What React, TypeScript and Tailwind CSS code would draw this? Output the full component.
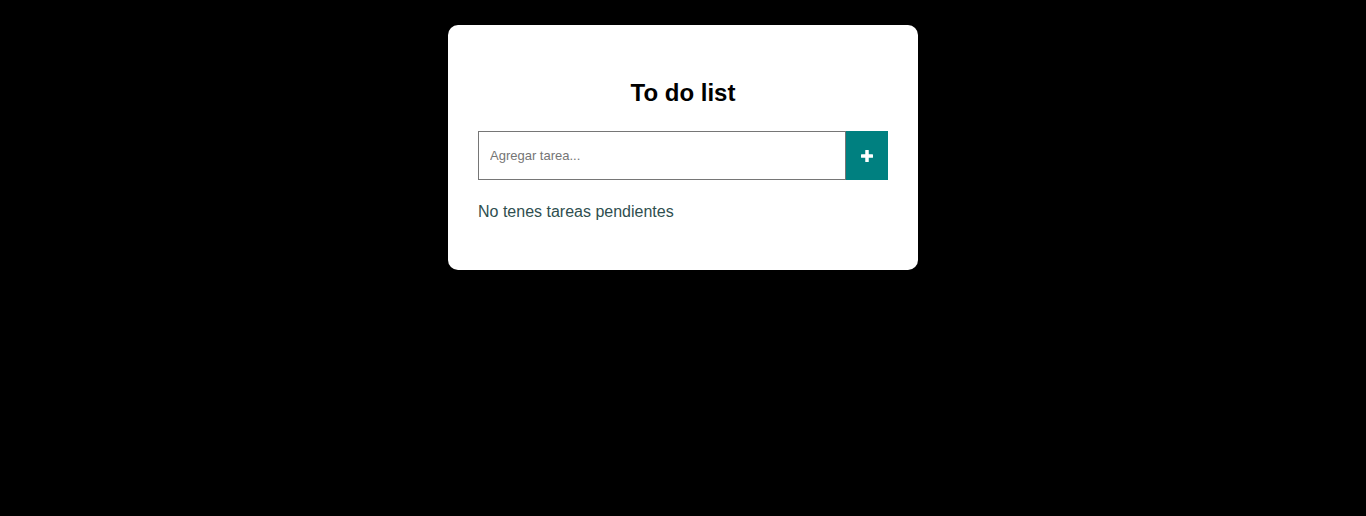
import React from "react";

export default function App() {
  return (
    <div className="min-h-[516px] w-full bg-black flex justify-center" style={{ fontFamily: '"Liberation Sans", Arial, sans-serif' }}>
      <div className="mt-[25px] w-[470px] h-fit bg-white rounded-[10px] px-[30px] pt-[54px] pb-[49px] flex flex-col">
        <h1 className="h-[28px] leading-[28px] text-[24px] font-bold text-black text-center">To do list</h1>
        <div className="mt-[24px] flex h-[49px]">
          <input
            type="text"
            placeholder="Agregar tarea..."
            className="flex-1 min-w-0 h-full border border-[#767676] px-[11px] text-[13px] text-black placeholder:text-[#757575] outline-none"
          />
          <button className="w-[42px] h-full bg-[#008080] flex items-center justify-center" aria-label="Agregar">
            <svg width="12" height="12" viewBox="0 0 12 12">
              <rect x="4.25" y="0" width="3.5" height="12" rx="0.5" fill="#fff" />
              <rect x="0" y="4.25" width="12" height="3.5" rx="0.5" fill="#fff" />
            </svg>
          </button>
        </div>
        <p className="mt-[23px] leading-[18px] text-[16px] text-[#2f4f4f]">No tenes tareas pendientes</p>
      </div>
    </div>
  );
}
